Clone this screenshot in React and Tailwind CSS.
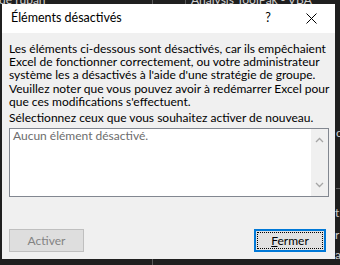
export default function App() {
  const font = { fontFamily: 'Lato, "Noto Sans", sans-serif' };
  return (
    <div className="relative w-[340px] h-[265px] overflow-hidden bg-[#1f1f1f]" style={font}>
      {/* background app fragments */}
      <div className="absolute left-[-1px] top-[-9px] text-[12px] text-[#d0d0d0] whitespace-nowrap">de ruban</div>
      <div className="absolute left-[191px] top-[-9px] text-[12px] text-[#d0d0d0] whitespace-nowrap">Analysis ToolPak - VBA</div>
      <div className="absolute left-[152px] top-0 w-px h-[5px] bg-[#5a5a5a]" />
      <div className="absolute left-[185px] top-0 w-px h-[5px] bg-[#5a5a5a]" />
      <div className="absolute left-[152px] top-[259px] w-px h-[6px] bg-[#5a5a5a]" />
      <div className="absolute left-[336px] top-[124px] text-[12px] text-[#d0d0d0]">c</div>
      <div className="absolute left-[335px] top-[204px] text-[12px] text-[#d0d0d0]">t</div>
      <div className="absolute left-[335px] top-[226px] text-[12px] text-[#d0d0d0]">r</div>
      <div className="absolute left-[335px] top-[246px] text-[12px] text-[#d0d0d0]">a</div>
      <div className="absolute left-[336px] top-[188px] w-[4px] h-px bg-[#5a5a5a]" />

      {/* dialog */}
      <div className="relative ml-[2px] mt-[4px] w-[333px] h-[255px] flex flex-col bg-[#f0f0f0]">
        <div className="h-[29px] shrink-0 bg-white flex items-center text-[12.5px] text-black">
          <span className="pl-[9px] flex-1">Éléments désactivés</span>
          <span className="w-[10px] mr-[33px] text-center">?</span>
          <svg width="11" height="11" viewBox="0 0 11 11" className="mr-[18px]">
            <path d="M0.5 0.5 L10.5 10.5 M10.5 0.5 L0.5 10.5" stroke="#000" strokeWidth="1" />
          </svg>
        </div>
        <div className="flex flex-col flex-1 pl-[7px] pr-[6px] pt-[9px] text-[12px] leading-[13px] text-black">
          <div className="whitespace-nowrap shrink-0">
            <div>Les éléments ci-dessous sont désactivés, car ils empêchaient</div>
            <div>Excel de fonctionner correctement, ou votre administrateur</div>
            <div>système les a désactivés à l'aide d'une stratégie de groupe.</div>
          </div>
          <div className="mt-[1px] whitespace-nowrap shrink-0">
            <div>Veuillez noter que vous pouvez avoir à redémarrer Excel pour</div>
            <div>que ces modifications s'effectuent.</div>
          </div>
          <div className="mt-[3px] whitespace-nowrap shrink-0">Sélectionnez ceux que vous souhaitez activer de nouveau.</div>
          <div className="mt-[4px] h-[69px] shrink-0 border border-[#828790] bg-white flex">
            <div className="flex-1 pl-[3px] pt-0 text-[#6d6d6d]">Aucun élément désactivé.</div>
            <div className="w-[17px] bg-[#f0f0f0] flex flex-col items-center justify-between py-[8px]">
              <svg width="9" height="6" viewBox="0 0 9 6">
                <path d="M1 5 L4.5 1.5 L8 5" stroke="#a6a6a6" strokeWidth="1.3" fill="none" />
              </svg>
              <svg width="9" height="6" viewBox="0 0 9 6">
                <path d="M1 1 L4.5 4.5 L8 1" stroke="#a6a6a6" strokeWidth="1.3" fill="none" />
              </svg>
            </div>
          </div>
          <div className="mt-[32px] shrink-0 flex justify-between pr-[3px]">
            <div className="w-[75px] h-[23px] border border-[#bfbfbf] bg-[#dedede] flex items-center justify-center text-[#838383]">
              Activer
            </div>
            <div className="w-[72px] h-[23px] border-2 border-[#0078d7] bg-[#e1e1e1] p-px">
              <div className="w-full h-full border border-dotted border-black flex items-center justify-center">
                <span><span className="underline">F</span>ermer</span>
              </div>
            </div>
          </div>
        </div>
      </div>
    </div>
  );
}
